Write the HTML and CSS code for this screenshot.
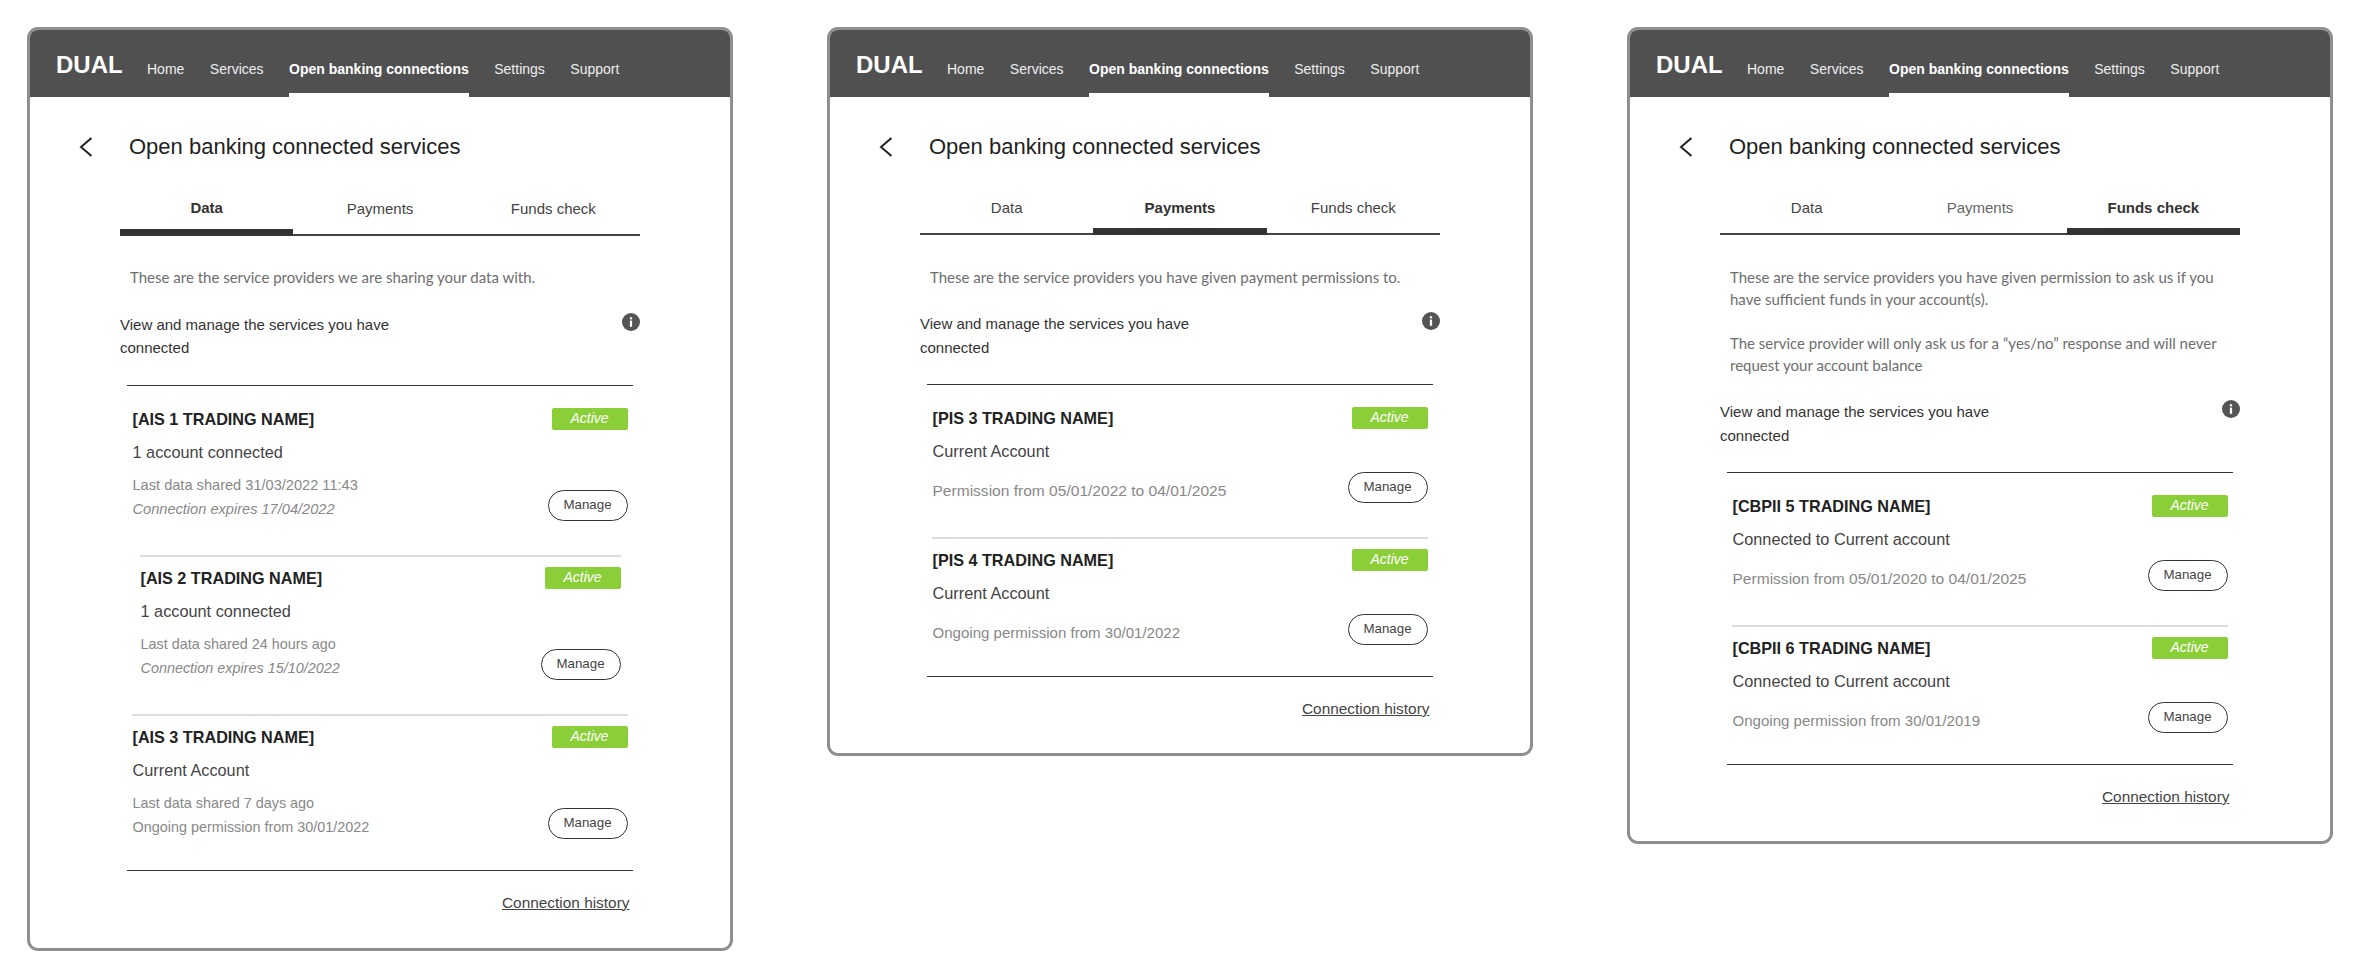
FILE: index.html
```html
<!DOCTYPE html>
<html lang="en">
<head>
<meta charset="utf-8">
<title>Open banking connected services</title>
<link rel="stylesheet" href="styles.css">
</head>
<body>
<svg class="sprite" width="0" height="0" aria-hidden="true">
  <symbol id="chev" viewBox="0 0 14 20"><path d="M12.5 1 L2 10 L12.5 19" fill="none" stroke="#222" stroke-width="2"/></symbol>
  <symbol id="info" viewBox="0 0 18 18"><circle cx="9" cy="9" r="9" fill="#555"/><rect x="7.9" y="7.6" width="2.2" height="6.2" fill="#fff"/><rect x="7.9" y="4.2" width="2.2" height="2.2" fill="#fff"/></symbol>
</svg>
<main class="page">

<section class="card">
  <header class="topbar">
    <span class="logo">DUAL</span>
    <nav class="nav"><a>Home</a><a>Services</a><a class="on">Open banking connections</a><a>Settings</a><a>Support</a></nav>
  </header>
  <div class="titlerow"><svg class="chev"><use href="#chev"/></svg><h1>Open banking connected services</h1></div>
  <div class="tabs"><a class="on">Data</a><a>Payments</a><a>Funds check</a></div>
  <div class="intro"><p>These are the service providers we are sharing your data with.</p></div>
  <div class="viewrow"><p>View and manage the services you have connected</p><svg class="info"><use href="#info"/></svg></div>
  <div class="list">
    <article class="item first">
      <div class="head"><h2>[AIS 1 TRADING NAME]</h2><span class="badge">Active</span></div>
      <p class="sub">1 account connected</p>
      <div class="foot"><div class="meta"><p class="long">Last data shared 31/03/2022 11:43</p><p class="em long">Connection expires 17/04/2022</p></div><a class="btn">Manage</a></div>
    </article>
    <article class="item inset">
      <div class="head"><h2>[AIS 2 TRADING NAME]</h2><span class="badge">Active</span></div>
      <p class="sub">1 account connected</p>
      <div class="foot"><div class="meta"><p>Last data shared 24 hours ago</p><p class="em">Connection expires 15/10/2022</p></div><a class="btn">Manage</a></div>
    </article>
    <article class="item">
      <div class="head"><h2>[AIS 3 TRADING NAME]</h2><span class="badge">Active</span></div>
      <p class="sub">Current Account</p>
      <div class="foot"><div class="meta"><p>Last data shared 7 days ago</p><p>Ongoing permission from 30/01/2022</p></div><a class="btn">Manage</a></div>
    </article>
  </div>
  <a class="history">Connection history</a>
</section>

<section class="card tight">
  <header class="topbar">
    <span class="logo">DUAL</span>
    <nav class="nav"><a>Home</a><a>Services</a><a class="on">Open banking connections</a><a>Settings</a><a>Support</a></nav>
  </header>
  <div class="titlerow"><svg class="chev"><use href="#chev"/></svg><h1>Open banking connected services</h1></div>
  <div class="tabs"><a>Data</a><a class="on">Payments</a><a>Funds check</a></div>
  <div class="intro"><p>These are the service providers you have given payment permissions to.</p></div>
  <div class="viewrow"><p>View and manage the services you have connected</p><svg class="info"><use href="#info"/></svg></div>
  <div class="list">
    <article class="item first">
      <div class="head"><h2>[PIS 3 TRADING NAME]</h2><span class="badge">Active</span></div>
      <p class="sub">Current Account</p>
      <div class="foot"><div class="meta"><p class="perm">Permission from 05/01/2022 to 04/01/2025</p></div><a class="btn">Manage</a></div>
    </article>
    <article class="item">
      <div class="head"><h2>[PIS 4 TRADING NAME]</h2><span class="badge">Active</span></div>
      <p class="sub">Current Account</p>
      <div class="foot"><div class="meta"><p class="ongoing">Ongoing permission from 30/01/2022</p></div><a class="btn">Manage</a></div>
    </article>
  </div>
  <a class="history">Connection history</a>
</section>

<section class="card tight">
  <header class="topbar">
    <span class="logo">DUAL</span>
    <nav class="nav"><a>Home</a><a>Services</a><a class="on">Open banking connections</a><a>Settings</a><a>Support</a></nav>
  </header>
  <div class="titlerow"><svg class="chev"><use href="#chev"/></svg><h1>Open banking connected services</h1></div>
  <div class="tabs"><a>Data</a><a class="dim">Payments</a><a class="on">Funds check</a></div>
  <div class="intro"><p>These are the service providers you have given permission to ask us if you have sufficient funds in your account(s).</p><p>The service provider will only ask us for a “yes/no” response and will never request your account balance</p></div>
  <div class="viewrow"><p>View and manage the services you have connected</p><svg class="info"><use href="#info"/></svg></div>
  <div class="list">
    <article class="item first">
      <div class="head"><h2>[CBPII 5 TRADING NAME]</h2><span class="badge">Active</span></div>
      <p class="sub">Connected to Current account</p>
      <div class="foot"><div class="meta"><p class="perm">Permission from 05/01/2020 to 04/01/2025</p></div><a class="btn">Manage</a></div>
    </article>
    <article class="item">
      <div class="head"><h2>[CBPII 6 TRADING NAME]</h2><span class="badge">Active</span></div>
      <p class="sub">Connected to Current account</p>
      <div class="foot"><div class="meta"><p class="ongoing">Ongoing permission from 30/01/2019</p></div><a class="btn">Manage</a></div>
    </article>
  </div>
  <a class="history">Connection history</a>
</section>

</main>
</body>
</html>
```
FILE: styles.css
```css
* { box-sizing: border-box; }
html, body { margin: 0; padding: 0; background: #fff; }
body { font-family: "Liberation Sans", Arial, sans-serif; color: #333; overflow: hidden; }
p, h1, h2 { margin: 0; font-weight: normal; }
.sprite { position: absolute; }
.page { display: flex; align-items: flex-start; gap: 94px; padding: 27px 0 0 27px; }
.card { width: 706px; flex: none; border: 3px solid #8f8f8f; border-radius: 11px; overflow: hidden; background: #fff; padding-bottom: 34px; }
.card.tight { padding-bottom: 32.5px; }

.topbar { display: flex; height: 67px; background: #505050; padding-left: 26px; color: #fff; }
.logo { font-size: 24px; font-weight: bold; line-height: 26px; margin-top: 22px; width: 65px; }
.nav { display: flex; gap: 25.5px; margin-left: 26px; }
.nav a { font-size: 14px; line-height: 20px; padding-top: 28.5px; color: #eee; height: 67px; border-bottom: 4px solid transparent; }
.nav a.on { font-weight: bold; color: #fff; border-bottom-color: #fff; }

.titlerow { display: flex; align-items: center; height: 34px; margin: 33px 0 0 49px; }
.chev { width: 14px; height: 20px; }
h1 { font-size: 22px; line-height: 34px; color: #222; margin-left: 36px; }

.tabs { display: flex; width: 520px; margin: 22px 0 0 90px; border-bottom: 2px solid #444; height: 50px; }
.tight .tabs { margin-top: 21px; }
.tabs a { flex: 1; text-align: center; font-size: 15px; line-height: 22px; padding-top: 12px; height: 50px; color: #444; }
.tabs a.dim { color: #666; }
.tabs a.on { font-weight: bold; color: #333; border-bottom: 7px solid #333; padding-top: 11px; }
.tight .tabs a.on { padding-top: 12px; }

.intro { margin: 30px 0 0 100px; width: 490px; }
.tight .intro { margin-top: 30.5px; }
.intro p { font-family: Lato, sans-serif; font-size: 15px; line-height: 22px; color: #6e6e6e; }
.intro p + p { margin-top: 22px; }

.viewrow { display: flex; justify-content: space-between; align-items: flex-start; width: 520px; margin: 24.5px 0 0 90px; }
.viewrow p { width: 290px; font-size: 15px; line-height: 23.5px; color: #333; }
.info { width: 18px; height: 18px; }

.list { width: 506.5px; margin: 25px 0 0 96.5px; border-top: 1.5px solid #333; border-bottom: 1.5px solid #333; }
.item { margin: 0 5.5px 0 5.5px; padding: 10px 0 31px 0.5px; border-top: 2px solid #ddd; }
.item.first { border-top: 0; padding-top: 22px; padding-bottom: 34px; }
.item.inset { margin: 0 12.5px 0 13px; padding: 10px 0 34px 1px; }
.head { display: flex; justify-content: space-between; align-items: center; height: 22px; }
h2 { font-size: 16.2px; font-weight: bold; line-height: 22px; color: #222; }
.badge { width: 76px; height: 22px; background: #8bcf38; color: #fff; font-size: 14px; font-style: italic; line-height: 20px; text-align: center; border-radius: 2px; }
.sub { font-size: 16.3px; line-height: 23px; margin-top: 11px; color: #444; }
.foot { display: flex; justify-content: space-between; align-items: flex-end; margin-top: 9px; min-height: 31px; }
.meta p { font-size: 14.4px; line-height: 24px; color: #888; }
.meta p.long { font-size: 14.6px; }
.meta p.perm { font-size: 15.55px; }
.meta p.ongoing { font-size: 15.05px; }
.meta p.em { font-style: italic; }
.btn { width: 80px; height: 31px; border: 1px solid #333; border-radius: 16px; font-size: 13.3px; line-height: 27px; text-align: center; color: #444; }

.history { display: block; width: max-content; margin: 21px 0 0 472px; font-size: 15.4px; line-height: 22px; color: #444; text-decoration: underline; }
```
